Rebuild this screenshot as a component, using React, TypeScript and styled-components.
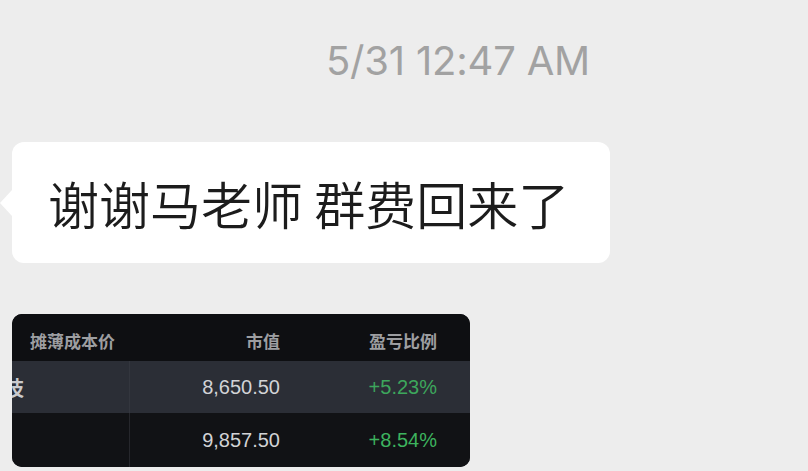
import React from "react";
import styled, { createGlobalStyle } from "styled-components";

const Global = createGlobalStyle`
  html, body { margin: 0; padding: 0; background: #ededed; }
  body { overflow: hidden; }
`;

const Page = styled.div`
  width: 808px;
  height: 471px;
  background: #ededed;
  display: flex;
  flex-direction: column;
  overflow: hidden;
`;

const TimeRow = styled.div`
  display: flex;
  padding: 37px 0 0 326px;
  height: 48px;
`;

const Time = styled.span`
  font-family: Inter, "Liberation Sans", sans-serif;
  font-size: 40px;
  line-height: 48px;
  color: #a2a2a2;
  letter-spacing: -0.2px;
`;

const BubbleRow = styled.div`
  display: flex;
  padding-left: 12px;
  margin-top: 57px;
`;

const Bubble = styled.div`
  position: relative;
  width: 598px;
  height: 121px;
  box-sizing: border-box;
  background: #ffffff;
  border-radius: 12px;
  display: flex;
  align-items: center;
  padding-left: 36px;
  font-family: "Noto Sans CJK SC", sans-serif;
  font-size: 51px;
  font-weight: 350;
  color: #1c1c1c;
  white-space: pre;
  &::before {
    content: "";
    position: absolute;
    left: -12px;
    top: 48px;
    border-style: solid;
    border-width: 13px 12px 13px 0;
    border-color: transparent #ffffff transparent transparent;
  }
`;

const CardRow = styled.div`
  display: flex;
  padding-left: 12px;
  margin-top: 51px;
`;

const Card = styled.div`
  width: 458px;
  height: 153px;
  border-radius: 10px;
  overflow: hidden;
  background: #0e0f12;
  display: grid;
  grid-template-columns: 118px 150px 1fr;
  grid-template-rows: 47px 52px 54px;
  font-family: "Liberation Sans", "Noto Sans CJK SC", sans-serif;
`;

const HeadCell = styled.div<{ $right?: boolean; $pad?: number }>`
  display: flex;
  align-items: center;
  justify-content: ${(p) => (p.$right ? "flex-end" : "flex-start")};
  padding: ${(p) => (p.$right ? `0 ${p.$pad ?? 0}px 0 0` : `0 0 0 ${p.$pad ?? 0}px`)};
  font-family: "Noto Sans CJK SC", sans-serif;
  font-size: 17px;
  font-weight: 700;
  color: #9d9ea1;
  background: #0e0f12;
  padding-top: 5px;
`;

const Cell = styled.div<{ $bg: string; $right?: boolean; $pad?: number; $line?: string; $green?: string }>`
  display: flex;
  align-items: center;
  justify-content: ${(p) => (p.$right ? "flex-end" : "flex-start")};
  padding-right: ${(p) => p.$pad ?? 0}px;
  background: ${(p) => p.$bg};
  border-right: ${(p) => (p.$line ? `1px solid ${p.$line}` : "none")};
  color: ${(p) => p.$green ?? "#d2d3d6"};
  font-size: 20px;
  overflow: hidden;
  white-space: nowrap;
`;

const Clipped = styled.span`
  font-family: "Noto Sans CJK SC", sans-serif;
  font-size: 20px;
  font-weight: 700;
  color: #c9cacd;
  text-indent: -28px;
  display: block;
`;

export default function App() {
  return (
    <>
      <Global />
      <Page>
        <TimeRow>
          <Time>5/31 12:47 AM</Time>
        </TimeRow>
        <BubbleRow>
          <Bubble>谢谢马老师 群费回来了</Bubble>
        </BubbleRow>
        <CardRow>
          <Card>
            <HeadCell $pad={18}>摊薄成本价</HeadCell>
            <HeadCell $right>市值</HeadCell>
            <HeadCell $right $pad={33}>盈亏比例</HeadCell>

            <Cell $bg="#2b2e36" $line="#33363e">
              <Clipped>科技</Clipped>
            </Cell>
            <Cell $bg="#2b2e36" $right>8,650.50</Cell>
            <Cell $bg="#2b2e36" $right $pad={33} $green="#3da65c">+5.23%</Cell>

            <Cell $bg="#111215" $line="#26272c" />
            <Cell $bg="#111215" $right>9,857.50</Cell>
            <Cell $bg="#111215" $right $pad={33} $green="#3db35e">+8.54%</Cell>
          </Card>
        </CardRow>
      </Page>
    </>
  );
}
